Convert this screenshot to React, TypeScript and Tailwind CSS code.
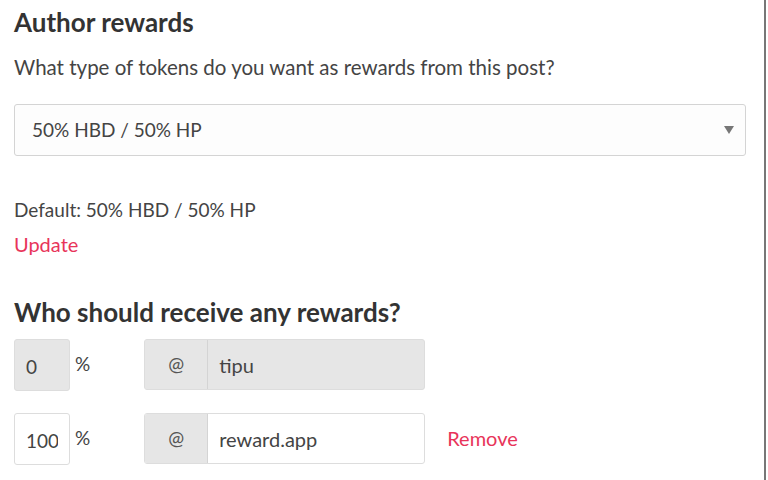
import { ChangeEvent, useState } from "react"

type Beneficiary = { weight: string; account: string; locked?: boolean }

const FONT = "font-['Lato','Noto_Sans',sans-serif]"

export default function App() {
  const [payout, setPayout] = useState("50% HBD / 50% HP")
  const [rows, setRows] = useState<Beneficiary[]>([
    { weight: "0", account: "tipu", locked: true },
    { weight: "100", account: "reward.app" },
  ])

  const update = (i: number, key: "weight" | "account") => (e: ChangeEvent<HTMLInputElement>) =>
    setRows((r) => r.map((row, j) => (j === i ? { ...row, [key]: e.target.value } : row)))

  return (
    <div className={`h-[480px] w-[766px] overflow-hidden border-r-2 border-[#777] bg-white text-[#333] ${FONT}`}>
      <div className="px-[14px] pt-[4px]">
        <h2 className="text-[26px] font-bold leading-[36px] text-[#333]">Author rewards</h2>
        <p className="mt-[14px] text-[20.5px] leading-[26px] text-[#444]">
          What type of tokens do you want as rewards from this post?
        </p>

        <div className="relative mt-[24px] w-[732px]">
          <select
            value={payout}
            onChange={(e) => setPayout(e.target.value)}
            className="h-[52px] w-full appearance-none rounded-[3px] border border-[#d4d4d4] bg-[#fdfdfd] pl-[17px] text-[19px] text-[#444] outline-none"
          >
            <option>50% HBD / 50% HP</option>
            <option>100% Hive Power</option>
            <option>Decline Payout</option>
          </select>
          <span className="pointer-events-none absolute right-[12px] top-[22px] h-0 w-0 border-x-[5px] border-t-[8px] border-x-transparent border-t-[#777]" />
        </div>

        <p className="mt-[41px] text-[19px] leading-[26px] text-[#444]">Default: 50% HBD / 50% HP</p>
        <a href="#" className="mt-[8px] block text-[20px] leading-[26px] text-[#e8345a]">
          Update
        </a>

        <h2 className="mt-[38px] text-[26px] font-bold leading-[34px] text-[#333]">
          Who should receive any rewards?
        </h2>

        <div className="mt-[10px] flex flex-col gap-[22px]">
          {rows.map((row, i) => (
            <div key={i} className="flex items-start">
              <input
                value={row.weight}
                onChange={update(i, "weight")}
                readOnly={row.locked}
                className={`h-[52px] w-[56px] rounded-[3px] border border-[#ddd] px-[11px] pt-[2px] text-[19px] text-[#444] outline-none ${
                  row.locked ? "bg-[#e6e6e6]" : "bg-white"
                }`}
              />
              <span className="ml-[5px] mt-[11px] text-[19px] text-[#444]">%</span>
              <div
                className={`ml-[54px] flex h-[51px] w-[281px] overflow-hidden rounded-[3px] border border-[#ddd] ${
                  row.locked ? "bg-[#e6e6e6]" : "bg-white"
                }`}
              >
                <span className="flex w-[63px] items-center justify-center border-r border-[#d4d4d4] bg-[#e6e6e6] text-[19px] text-[#555]">
                  @
                </span>
                <input
                  value={row.account}
                  onChange={update(i, "account")}
                  readOnly={row.locked}
                  className="min-w-0 flex-1 bg-transparent pl-[11px] text-[20px] text-[#444] outline-none"
                />
              </div>
              {!row.locked && (
                <a href="#" className="ml-[22px] mt-[10px] text-[20px] text-[#e8345a]">
                  Remove
                </a>
              )}
            </div>
          ))}
        </div>
      </div>
    </div>
  )
}
